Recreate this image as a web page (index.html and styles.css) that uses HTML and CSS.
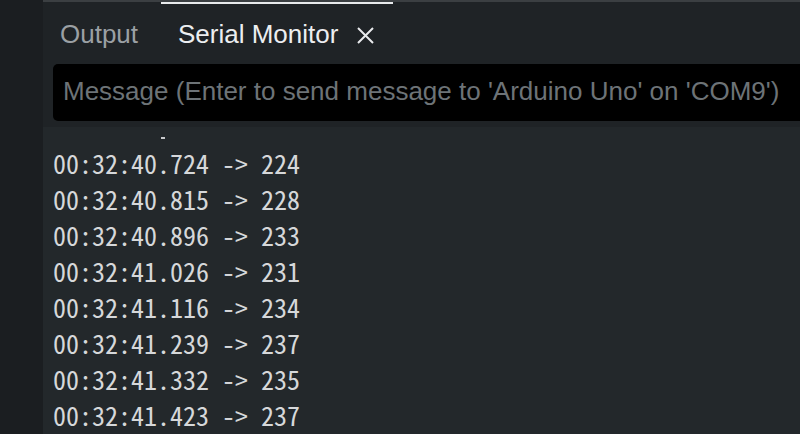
FILE: index.html
```html
<!DOCTYPE html>
<html>
<head lang="en">
  <meta charset="UTF-8">
  <title>Serial Monitor</title>
  <link rel="stylesheet" href="styles.css">
</head>
<body>
<div class="side"></div>
<div class="main">
  <div class="topline"></div>
  <div class="tabs">
    <div class="tab">Output</div>
    <div class="tab tab-active">Serial Monitor
      <svg class="close" width="17" height="17" viewBox="0 0 17 17">
        <path d="M1 1 L16 16 M16 1 L1 16" stroke="#e8eaec" stroke-width="2" fill="none"/>
      </svg>
    </div>
  </div>
  <div class="message">Message (Enter to send message to 'Arduino Uno' on 'COM9')</div>
  <div class="monitor">
    <div class="peek"></div>
    <div class="line">00:32:40.724 -&gt; 224</div>
    <div class="line">00:32:40.815 -&gt; 228</div>
    <div class="line">00:32:40.896 -&gt; 233</div>
    <div class="line">00:32:41.026 -&gt; 231</div>
    <div class="line">00:32:41.116 -&gt; 234</div>
    <div class="line">00:32:41.239 -&gt; 237</div>
    <div class="line">00:32:41.332 -&gt; 235</div>
    <div class="line">00:32:41.423 -&gt; 237</div>
  </div>
</div>
</body>
</html>
```

FILE: styles.css
```css
html, body {
  margin: 0;
  padding: 0;
  height: 100%;
  overflow: hidden;
}

body {
  display: flex;
  background: #1f2326;
  font-family: "Liberation Sans", Arial, sans-serif;
}

.side {
  width: 43px;
  background: #1b1e21;
}

.main {
  flex: 1;
  display: flex;
  flex-direction: column;
  min-width: 0;
}

.topline {
  height: 2px;
  background: #3b3f42;
}

.tabs {
  display: flex;
  height: 62px;
}

.tab {
  box-sizing: border-box;
  width: 118px;
  padding: 0 17px;
  border-top: 2px solid transparent;
  font-size: 26px;
  line-height: 60px;
  color: #9ba0a4;
  white-space: nowrap;
}

.tab-active {
  width: 232px;
  display: flex;
  align-items: center;
  border-top-color: #e8eaec;
  color: #eceef0;
}

.close {
  flex: none;
  margin-left: 19px;
  margin-top: 2px;
}

.message {
  margin-left: 10px;
  height: 57px;
  padding-left: 10px;
  border-radius: 5px 0 0 5px;
  background: #000000;
  color: #6d7377;
  font-size: 26px;
  line-height: 54px;
  white-space: nowrap;
  overflow: hidden;
}

.monitor {
  flex: 1;
  margin-top: 6px;
  padding-left: 10px;
  background: #23282b;
  color: #d6d8da;
  font-family: "Noto Sans Mono CJK KR", "Noto Sans Mono CJK SC", "Liberation Mono", monospace;
  font-size: 26px;
  overflow: hidden;
}

.peek {
  width: 4px;
  height: 2px;
  margin: 10px 0 0 108px;
  background: #c8cacc;
}

.line {
  height: 36px;
  line-height: 36px;
  white-space: pre;
}

.peek + .line {
  margin-top: 6px;
}
```
